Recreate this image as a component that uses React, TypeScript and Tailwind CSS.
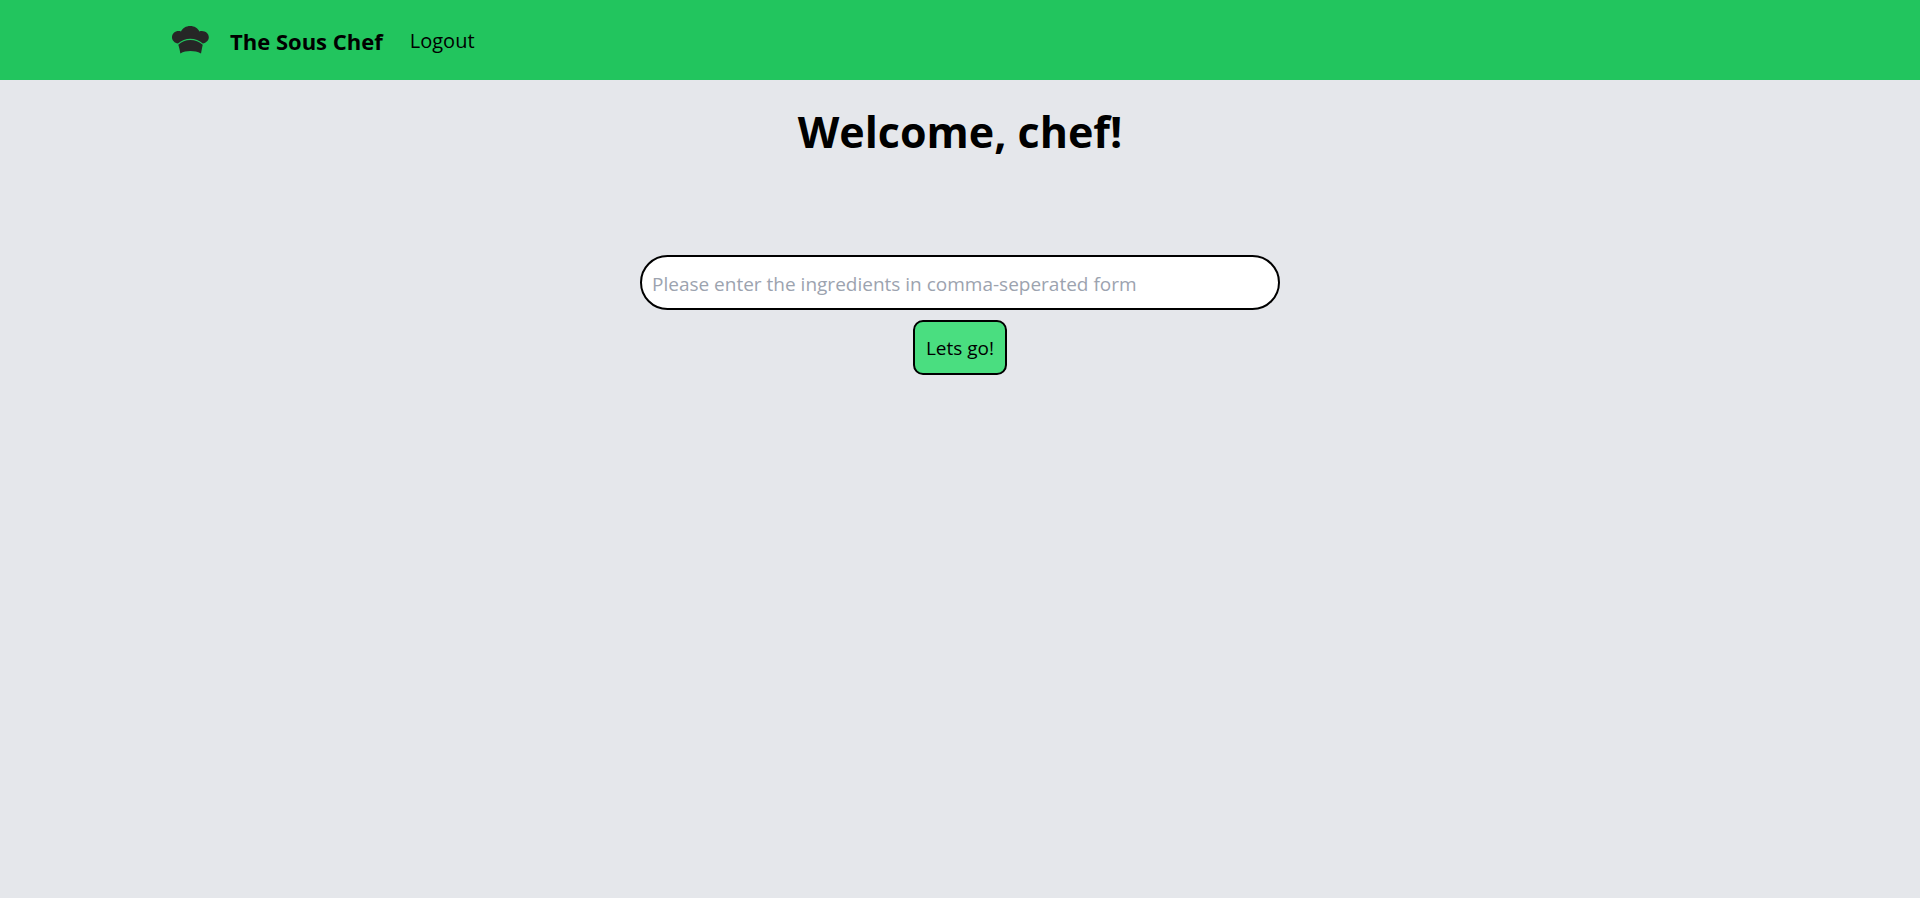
import React from "react";

function ChefHat() {
  return (
    <svg viewBox="0 0 37 28" className="h-7 w-[37px]" fill="#262626" aria-hidden="true">
      <path d="M6 17.5C2.6 16.9 0 14.4 0 11.2C0 7.6 2.9 5 6.6 5C7.5 5 8.3 5.1 9 5.4C10.6 2.1 14 0 18.2 0C22.4 0 25.8 2.1 27.4 5.4C28.1 5.1 28.9 5 29.8 5C33.7 5 36.8 7.8 36.8 11.3C36.8 14.5 34.2 17 30.8 17.5C27.4 14.5 23.1 12.8 18.4 12.8C13.7 12.8 9.4 14.5 6 17.5Z" />
      <path d="M6.3 18.8C9.6 15.7 13.7 14.1 18.4 14.1C23.1 14.1 27.2 15.7 30.7 18.8C30.2 21.5 29.5 24.5 29 27.4C25.7 25.8 22.1 25 18.4 25C14.7 25 11.3 25.8 8.3 27.4C8 24.5 7.1 21.5 6.3 18.8Z" />
    </svg>
  );
}

export default function App() {
  return (
    <div className="min-h-screen bg-[#e5e7eb] font-['Open_Sans','Noto_Sans',sans-serif] text-black">
      <nav className="flex h-20 items-center bg-[#22c55e] px-43">
        <ChefHat />
        <a href="#" className="ml-[21px] pt-[2px] text-[22px] leading-8 font-bold">
          The Sous Chef
        </a>
        <a href="#" className="ml-[27px] pt-[2px] text-[20px] leading-8">
          Logout
        </a>
      </nav>
      <main className="flex flex-col items-center pt-6">
        <h1 className="text-[43px] leading-[56px] font-bold">Welcome, chef!</h1>
        <form
          className="mt-[95px] flex w-1/3 flex-col items-center gap-[10px]"
          onSubmit={(event) => event.preventDefault()}
        >
          <input
            type="text"
            aria-label="Ingredients"
            placeholder="Please enter the ingredients in comma-seperated form"
            className="h-[55px] w-full rounded-full border-2 border-black bg-white px-[10px] pt-[2px] text-[19px] placeholder:text-[#9ca3af]"
          />
          <button
            type="submit"
            className="h-[55px] rounded-[10px] border-2 border-black bg-[#4ade80] px-[11px] pt-[2px] text-[19px]"
          >
            Lets go!
          </button>
        </form>
      </main>
    </div>
  );
}
